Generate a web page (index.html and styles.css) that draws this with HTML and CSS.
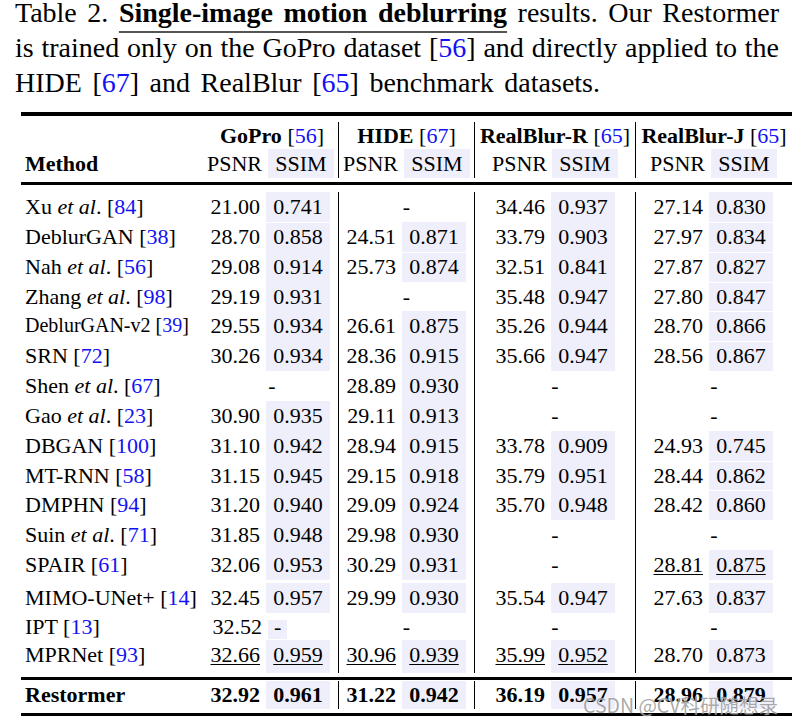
FILE: index.html
```html
<!DOCTYPE html>
<html lang="en">
<head>
<meta charset="utf-8">
<title>Table 2</title>
<link rel="stylesheet" href="styles.css">
</head>
<body>
<div class="page">
  <p class="caption"><span class="ln full">Table 2. <span class="title">Single-image motion deblurring</span> results. Our Restormer</span><span class="ln full">is trained only on the GoPro dataset [<span class="c">56</span>] and directly applied to the</span><span class="ln last">HIDE [<span class="c">67</span>] and RealBlur [<span class="c">65</span>] benchmark datasets.</span></p>

  <div class="table">
    <div class="rule top"></div>

    <div class="row h1">
      <div></div>
      <div class="grp"><b>GoPro</b> [<span class="c">56</span>]</div>
      <div class="grp vl"><b>HIDE</b> [<span class="c">67</span>]</div>
      <div class="grp vl"><b>RealBlur-R</b> [<span class="c">65</span>]</div>
      <div class="grp vl"><b>RealBlur-J</b> [<span class="c">65</span>]</div>
    </div>
    <div class="row h2">
      <div class="m"><b>Method</b></div>
      <div class="hp">PSNR</div><div class="hs">SSIM</div>
      <div class="hp vl">PSNR</div><div class="hs">SSIM</div>
      <div class="hp vl">PSNR</div><div class="hs r">SSIM</div>
      <div class="hp vl">PSNR</div><div class="hs j">SSIM</div>
    </div>

    <div class="rule mid"></div>

    <div class="row">
      <div class="m">Xu <i>et al</i>. [<span class="c">84</span>]</div>
      <div class="p">21.00</div><div class="s">0.741</div>
      <div class="d vl">-</div>
      <div class="p vl">34.46</div><div class="s r">0.937</div>
      <div class="p vl">27.14</div><div class="s j">0.830</div>
    </div>
    <div class="row">
      <div class="m">DeblurGAN [<span class="c">38</span>]</div>
      <div class="p">28.70</div><div class="s gt">0.858</div>
      <div class="p vl">24.51</div><div class="s">0.871</div>
      <div class="p vl">33.79</div><div class="s r">0.903</div>
      <div class="p vl">27.97</div><div class="s j gt">0.834</div>
    </div>
    <div class="row">
      <div class="m">Nah <i>et al</i>. [<span class="c">56</span>]</div>
      <div class="p">29.08</div><div class="s">0.914</div>
      <div class="p vl">25.73</div><div class="s gt">0.874</div>
      <div class="p vl">32.51</div><div class="s r">0.841</div>
      <div class="p vl">27.87</div><div class="s j gt">0.827</div>
    </div>
    <div class="row">
      <div class="m">Zhang <i>et al</i>. [<span class="c">98</span>]</div>
      <div class="p">29.19</div><div class="s">0.931</div>
      <div class="d vl">-</div>
      <div class="p vl">35.48</div><div class="s r">0.947</div>
      <div class="p vl">27.80</div><div class="s j gt">0.847</div>
    </div>
    <div class="row">
      <div class="m small">DeblurGAN-v2 [<span class="c">39</span>]</div>
      <div class="p">29.55</div><div class="s">0.934</div>
      <div class="p vl">26.61</div><div class="s">0.875</div>
      <div class="p vl">35.26</div><div class="s r">0.944</div>
      <div class="p vl">28.70</div><div class="s j gt">0.866</div>
    </div>
    <div class="row">
      <div class="m">SRN [<span class="c">72</span>]</div>
      <div class="p">30.26</div><div class="s">0.934</div>
      <div class="p vl">28.36</div><div class="s">0.915</div>
      <div class="p vl">35.66</div><div class="s r">0.947</div>
      <div class="p vl">28.56</div><div class="s j gt">0.867</div>
    </div>
    <div class="row">
      <div class="m">Shen <i>et al</i>. [<span class="c">67</span>]</div>
      <div class="d">-</div>
      <div class="p vl">28.89</div><div class="s">0.930</div>
      <div class="d vl">-</div>
      <div class="d vl">-</div>
    </div>
    <div class="row">
      <div class="m">Gao <i>et al</i>. [<span class="c">23</span>]</div>
      <div class="p">30.90</div><div class="s">0.935</div>
      <div class="p vl">29.11</div><div class="s">0.913</div>
      <div class="d vl">-</div>
      <div class="d vl">-</div>
    </div>
    <div class="row">
      <div class="m">DBGAN [<span class="c">100</span>]</div>
      <div class="p">31.10</div><div class="s">0.942</div>
      <div class="p vl">28.94</div><div class="s">0.915</div>
      <div class="p vl">33.78</div><div class="s r">0.909</div>
      <div class="p vl">24.93</div><div class="s j">0.745</div>
    </div>
    <div class="row">
      <div class="m">MT-RNN [<span class="c">58</span>]</div>
      <div class="p">31.15</div><div class="s">0.945</div>
      <div class="p vl">29.15</div><div class="s">0.918</div>
      <div class="p vl">35.79</div><div class="s r">0.951</div>
      <div class="p vl">28.44</div><div class="s j gt">0.862</div>
    </div>
    <div class="row">
      <div class="m">DMPHN [<span class="c">94</span>]</div>
      <div class="p">31.20</div><div class="s">0.940</div>
      <div class="p vl">29.09</div><div class="s">0.924</div>
      <div class="p vl">35.70</div><div class="s r">0.948</div>
      <div class="p vl">28.42</div><div class="s j gt">0.860</div>
    </div>
    <div class="row">
      <div class="m">Suin <i>et al</i>. [<span class="c">71</span>]</div>
      <div class="p">31.85</div><div class="s">0.948</div>
      <div class="p vl">29.98</div><div class="s">0.930</div>
      <div class="d vl">-</div>
      <div class="d vl">-</div>
    </div>
    <div class="row">
      <div class="m">SPAIR [<span class="c">61</span>]</div>
      <div class="p">32.06</div><div class="s">0.953</div>
      <div class="p vl">30.29</div><div class="s">0.931</div>
      <div class="d vl">-</div>
      <div class="p vl"><u>28.81</u></div><div class="s j"><u>0.875</u></div>
    </div>
    <div class="row mimo">
      <div class="m">MIMO-UNet+ [<span class="c">14</span>]</div>
      <div class="p">32.45</div><div class="s">0.957</div>
      <div class="p vl">29.99</div><div class="s">0.930</div>
      <div class="p vl">35.54</div><div class="s r">0.947</div>
      <div class="p vl">27.63</div><div class="s j">0.837</div>
    </div>
    <div class="row ipt">
      <div class="m">IPT [<span class="c">13</span>]</div>
      <div class="p ip">32.52</div><div class="sbox"><span>-</span></div>
      <div class="d vl">-</div>
      <div class="d vl">-</div>
      <div class="d vl">-</div>
    </div>
    <div class="row mpr">
      <div class="m">MPRNet [<span class="c">93</span>]</div>
      <div class="p"><u>32.66</u></div><div class="s"><u>0.959</u></div>
      <div class="p vl"><u>30.96</u></div><div class="s"><u>0.939</u></div>
      <div class="p vl"><u>35.99</u></div><div class="s r"><u>0.952</u></div>
      <div class="p vl">28.70</div><div class="s j">0.873</div>
    </div>

    <div class="rule pre"></div>

    <div class="row final">
      <div class="m">Restormer</div>
      <div class="p">32.92</div><div class="s">0.961</div>
      <div class="p vl">31.22</div><div class="s">0.942</div>
      <div class="p vl">36.19</div><div class="s r">0.957</div>
      <div class="p vl">28.96</div><div class="s j">0.879</div>
    </div>

    <div class="rule bottom"></div>
  </div>

  <div class="watermark">CSDN @CV科研随想录</div>
</div>
</body>
</html>
```

FILE: styles.css
```css
html, body {
  margin: 0;
  padding: 0;
  background: #fff;
}

body {
  font-family: "Liberation Serif", "Times New Roman", serif;
  color: #000;
}

.page {
  position: relative;
  width: 793px;
  height: 724px;
  overflow: hidden;
  background: #fff;
}

.caption {
  margin: -3.85px 0 0;
  padding-left: 15px;
  font-size: 28px;
  line-height: 34.8px;
  white-space: nowrap;
}

.ln {
  display: block;
  text-align: justify;
  text-align-last: justify;
  white-space: normal;
}

.ln.full {
  width: 764px;
}

.ln.last {
  width: 585px;
}

.title {
  font-weight: bold;
  text-decoration: underline;
  text-decoration-color: #555;
  text-decoration-thickness: 1.5px;
  text-underline-offset: 9px;
}

.c {
  color: #1212f2;
  font-weight: normal;
}

.table {
  margin: 11.45px 0 0 21px;
  width: 771px;
  font-size: 22px;
}

.rule {
  background: #000;
}

.rule.top {
  height: 4px;
  margin-bottom: 6px;
}

.rule.mid {
  height: 3px;
  margin: 4px 0 7px;
}

.rule.pre {
  height: 3px;
  margin: 4px 0 1px;
}

.rule.bottom {
  height: 3px;
  margin-top: 4px;
}

.row {
  display: grid;
  grid-template-columns: 185px 58px 74px 62px 74px 75px 86px 72px 85px;
  height: 29.85px;
  line-height: 29.85px;
  white-space: nowrap;
}

.row.h1 {
  height: 27px;
  line-height: 27px;
}

.row.h2 {
  height: 29px;
  line-height: 29px;
}

.row.mimo {
  height: 36px;
  line-height: 36px;
}

.row.ipt {
  height: 21px;
  line-height: 21px;
}

.row.mpr {
  height: 36px;
  line-height: 36px;
}

.row.final {
  height: 28px;
  line-height: 28px;
  font-weight: bold;
}

.vl {
  border-left: 1px solid #000;
}

.grp {
  grid-column: span 2;
  text-align: center;
}

.m {
  padding-left: 4px;
}

.m.small {
  font-size: 20px;
}

.p {
  text-align: right;
  padding-right: 4px;
}

.p.ip {
  padding-right: 2px;
}

.d {
  grid-column: span 2;
  text-align: center;
}

.s {
  text-align: center;
  padding: 0 8px 0 2px;
  background: linear-gradient(#efeffb, #efeffb) content-box;
}

.s.r {
  padding-right: 20px;
}

.s.j {
  padding-right: 19px;
}

.s.gt {
  background-repeat: no-repeat;
  background-position: 0 1px;
  background-size: 100% calc(100% - 1px);
}

.mimo .s {
  background-repeat: no-repeat;
  background-position: 0 3px;
  background-size: 100% 30px;
}

.mpr .s {
  background-repeat: no-repeat;
  background-position: 0 3px;
  background-size: 100% 33px;
}

.hp {
  text-align: right;
  padding-right: 2px;
}

.hs {
  text-align: center;
  padding: 0 4px;
  background: linear-gradient(#efeffb, #efeffb) content-box;
}

.hs.r {
  padding: 0 17px 0 3px;
}

.hs.j {
  padding: 0 15px 0 4px;
}

.sbox {
  padding-left: 4px;
}

.sbox span {
  display: inline-block;
  line-height: 13px;
  padding: 0 6px 6px;
  background: #efeffb;
  vertical-align: baseline;
}

u {
  text-decoration: underline;
  text-decoration-thickness: 1px;
  text-underline-offset: 2px;
}

.watermark {
  position: absolute;
  left: 583px;
  top: 695px;
  font-family: "Noto Sans CJK SC", "Noto Sans", sans-serif;
  font-size: 19.5px;
  line-height: 20px;
  color: rgba(110, 110, 110, 0.6);
  text-shadow: 0 0 1px rgba(255, 255, 255, 0.9);
  white-space: nowrap;
}
```
